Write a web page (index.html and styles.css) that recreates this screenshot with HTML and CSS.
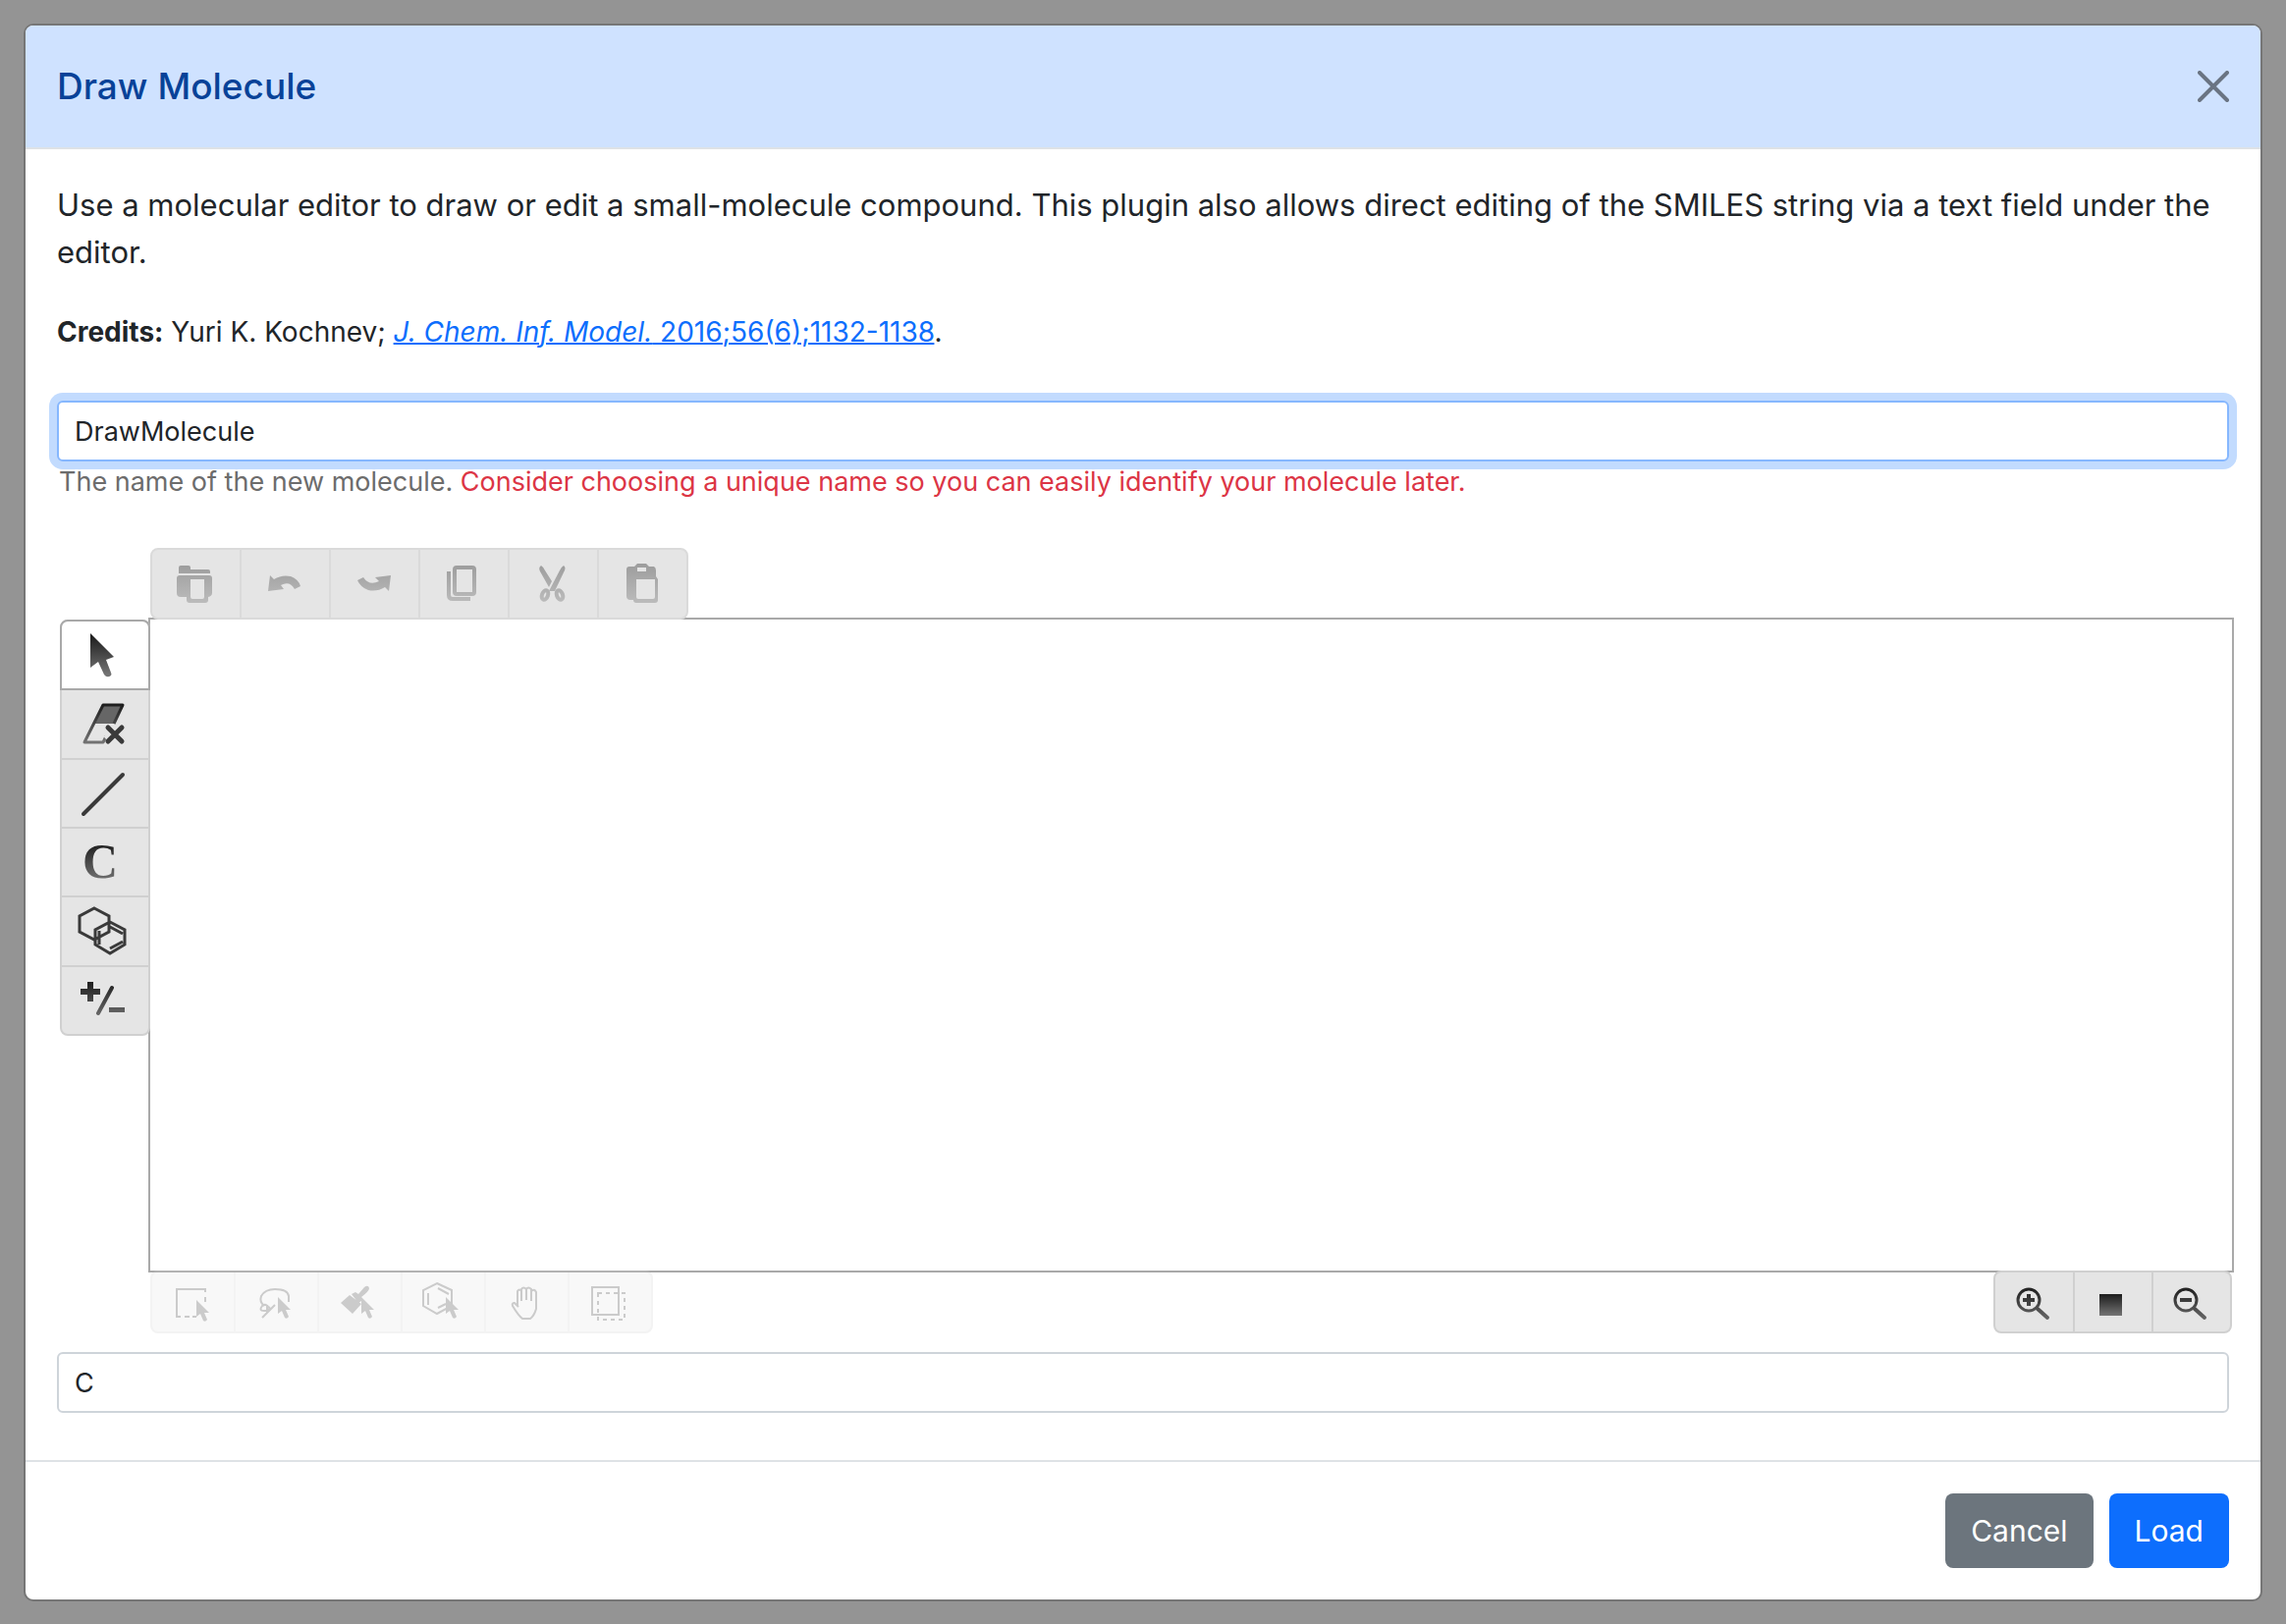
FILE: index.html
```html
<!DOCTYPE html>
<html lang="en">
<head>
<meta charset="utf-8">
<title>Draw Molecule</title>
<link rel="stylesheet" href="styles.css">
</head>
<body>
<svg class="defs" aria-hidden="true">
  <defs>
    <linearGradient id="dark" gradientUnits="userSpaceOnUse" x1="0" y1="4" x2="0" y2="44"><stop offset="0" stop-color="#1c1c1c"/><stop offset="1" stop-color="#747474"/></linearGradient>
    <linearGradient id="pale" gradientUnits="userSpaceOnUse" x1="0" y1="4" x2="0" y2="44"><stop offset="0" stop-color="#9d9d9d"/><stop offset="1" stop-color="#bcbcbc"/></linearGradient>
    <linearGradient id="square" x1="0" y1="0" x2="0" y2="1"><stop offset="0" stop-color="#1c1c1c"/><stop offset="1" stop-color="#747474"/></linearGradient>
    <path id="pointer" d="M0 0v17l4-3 3 7q2 2 4-1l-3-7h5z"/>
  </defs>
</svg>
<main class="modal" role="dialog" aria-labelledby="title">
  <header class="modal-header">
    <h1 id="title">Draw Molecule</h1>
    <button class="close" type="button" aria-label="Close">
      <svg viewBox="0 0 32 32"><path d="M2 2l28 28M30 2L2 30" fill="none" stroke="#6a7483" stroke-width="4" stroke-linecap="round"/></svg>
    </button>
  </header>
  <div class="modal-body">
    <p class="intro">Use a molecular editor to draw or edit a small-molecule compound. This plugin also allows direct editing of the SMILES string via a text field under the editor.</p>
    <p class="credits"><b>Credits:</b> Yuri K. Kochnev; <a href="#"><i>J. Chem. Inf. Model.</i> 2016;56(6);1132-1138</a>.</p>
    <div class="field">
      <input class="control active" id="name" type="text" value="DrawMolecule" aria-label="Molecule name" aria-describedby="hint">
      <p class="hint" id="hint">The name of the new molecule. <span class="warn">Consider choosing a unique name so you can easily identify your molecule later.</span></p>
    </div>
    <section class="editor" aria-label="Molecular editor">
      <div class="tools tools-top pale" role="toolbar" aria-label="Edit">
        <button type="button" disabled aria-label="Open"><svg viewBox="0 0 48 48"><path d="M8 13V7q0-2 2-2h8q2 0 2 2v2h18q2 0 2 2v2z"/><path fill-rule="evenodd" d="M9 15h30q3 0 3 3v15q0 3-4 4v3q0 3-3 3H19q-3 0-3-3v-3h-6q-4 0-4-4V18q0-3 3-3zm11 4v18q0 2 2 2h10q2 0 2-2V19z"/></svg></button>
        <button type="button" disabled aria-label="Undo"><svg viewBox="0 0 48 48"><path d="M8 31l2-16 4 4q8-5 17-3 8 3 10 10l-6 3q-5-9-14-4l3 4z"/></svg></button>
        <button type="button" disabled aria-label="Redo"><svg viewBox="0 0 48 48"><path d="M42 15l-2 16-4-4q-8 5-17 3-8-3-11-10l6-3q6 9 16 4l-4-4z"/></svg></button>
        <button type="button" disabled aria-label="Copy"><svg viewBox="0 0 48 48"><path class="line" stroke-width="4" d="M18 7h16q2 0 2 2v23q0 2-2 2H18q-2 0-2-2V9q0-2 2-2z"/><path class="line" stroke-width="4" d="M10 11v24q0 4 4 4h18"/></svg></button>
        <button type="button" disabled aria-label="Cut"><svg viewBox="0 0 48 48"><path d="M13 5q3 2 4 5l7 11-3 6-9-16q-2-4 1-6zM36 5q3 2 0 7L27 31h-6l11-21q1-3 4-5z"/><ellipse class="line" stroke-width="4" cx="17" cy="35" rx="3" ry="5" transform="rotate(20 17 35)"/><ellipse class="line" stroke-width="4" cx="32" cy="35" rx="3" ry="5" transform="rotate(-20 32 35)"/></svg></button>
        <button type="button" disabled aria-label="Paste"><svg viewBox="0 0 48 48"><path fill-rule="evenodd" d="M12 6h5l3-3h9l3 3h5q2 1 2 4v6l2 3v21q0 3-3 3H19q-3 0-3-3h-3q-4 0-4-4V9q0-3 3-3zm8 1v4h9V7zm-1 12v18q0 2 2 2h15q2 0 2-2V19z"/></svg></button>
      </div>
      <div class="tools tools-side" role="toolbar" aria-label="Draw">
        <button type="button" class="selected" aria-label="Select"><svg viewBox="0 0 48 48"><path d="M12 2v35l8-6 6 13q3 4 7 1 1-1 0-3l-5-13 8-3z"/></svg></button>
        <button type="button" aria-label="Erase"><svg viewBox="0 0 48 48"><path fill="#666" d="M25 4h21L36 24H16z"/><path class="line" stroke-width="3" stroke-linejoin="round" d="M36 24L45 5H25L6 43h19l3-6"/><path stroke="#e5e5e5" stroke-width="10" d="M29 28l14 13M43 28L29 41"/><path class="line flat" stroke-width="5" stroke-linecap="round" d="M30 28l14 14M44 28L30 42"/></svg></button>
        <button type="button" aria-label="Bond"><svg viewBox="0 0 48 48"><path class="line flat" stroke-width="4" stroke-linecap="round" d="M5 45L45 5"/></svg></button>
        <button type="button" aria-label="Carbon atom"><svg viewBox="0 0 48 48"><text x="4" y="40">C</text></svg></button>
        <button type="button" aria-label="Ring templates"><svg viewBox="0 0 48 48"><g class="line flat" stroke-width="3"><path d="M16 1l15 8v16l-15 8-15-8V9zM32 15l15 8v15l-15 9-15-9V23zM32 20l13 7M21 24v14M32 42l13-7"/></g></svg></button>
        <button type="button" aria-label="Charge"><svg viewBox="0 0 48 48"><path d="M2 12h7V5h6v7h7v6h-7v7H9v-7H2z"/><path class="line" stroke-width="4" stroke-linecap="round" d="M34 11L20 37"/><path d="M31 31h16v5H31z"/></svg></button>
      </div>
      <div class="canvas"></div>
      <div class="tools-row">
        <div class="tools tools-select" role="toolbar" aria-label="Selection">
          <button type="button" disabled aria-label="Rectangle"><svg viewBox="0 0 40 40"><path class="line" stroke-width="2" d="M5 36V7h29v3M34 15v5M5 35h4M13 35h5M21 35h4"/><use href="#pointer" x="25" y="18"/></svg></button>
          <button type="button" disabled aria-label="Lasso"><svg viewBox="0 0 40 40"><path class="line" stroke-width="2" d="M9 24q-5-4-3-10 4-7 14-7 13 0 14 7v6M20 23L7 36M14 26q-3-5-7-2-4 5 2 5 7 0 5-4M12 24v7"/><use href="#pointer" x="23" y="15"/></svg></button>
          <button type="button" disabled aria-label="Brush"><svg viewBox="0 0 40 40"><path d="M2 21l9-8 12 9-9 10zM13 12l4-2 3 2 6-7q4-3 5 1 0 3-8 9v4l-3 2z"/><use href="#pointer" x="23" y="15"/></svg></button>
          <button type="button" disabled aria-label="Fragment"><svg viewBox="0 0 40 40"><path class="line" stroke-width="2" d="M15 1l15 7v16l-15 8-14-8V8zM16 6l11 6M6 11v12M16 26l8-4"/><use href="#pointer" x="24" y="15"/></svg></button>
          <button type="button" disabled aria-label="Pan"><svg viewBox="0 0 40 40"><path class="line" stroke-width="2" d="M12 24V9q2-3 4 0v10V7q2-3 5 0v11V7q2-3 5 0v12V9q3-3 5 1v17q-2 7-6 10h-8Q13 34 7 24q-1-3 2-3l4 4"/></svg></button>
          <button type="button" disabled aria-label="Select all"><svg viewBox="0 0 40 40"><path class="line" stroke-width="2" d="M3 5h27v28H3z"/><path class="line" stroke-width="2" stroke-dasharray="4 4" d="M9 11h27v27H9z"/></svg></button>
        </div>
        <div class="tools tools-zoom" role="toolbar" aria-label="Zoom">
          <button type="button" aria-label="Zoom in"><svg viewBox="0 0 40 40"><circle class="line" stroke-width="3" cx="15" cy="18" r="11"/><path d="M9 16h4v-4h4v4h4v4h-4v4h-4v-4H9z"/><path class="line" stroke-width="4" stroke-linecap="round" d="M24 27l10 9"/></svg></button>
          <button type="button" aria-label="Fit to canvas"><svg viewBox="0 0 40 40"><path class="block" d="M7 12h23v22H7z"/></svg></button>
          <button type="button" aria-label="Zoom out"><svg viewBox="0 0 40 40"><circle class="line" stroke-width="3" cx="15" cy="18" r="11"/><path d="M9 16h12v4H9z"/><path class="line" stroke-width="4" stroke-linecap="round" d="M24 27l10 9"/></svg></button>
        </div>
      </div>
    </section>
    <input class="control" type="text" value="C" aria-label="SMILES string">
  </div>
  <footer class="modal-footer">
    <button class="btn secondary" type="button">Cancel</button>
    <button class="btn primary" type="button">Load</button>
  </footer>
</main>
</body>
</html>
```
FILE: styles.css
```css
* {
  box-sizing: border-box;
}

body {
  margin: 0;
  min-height: 100vh;
  padding: 24px 24px 23px;
  display: flex;
  background: #949494;
  color: #212529;
  font-family: Inter, "Liberation Sans", sans-serif;
  font-size: 31px;
  line-height: 48px;
}

h1,
p {
  margin: 0;
}

button,
input {
  font: inherit;
}

.defs {
  position: absolute;
  width: 0;
  height: 0;
}

.modal {
  flex: 1;
  min-width: 0;
  display: flex;
  flex-direction: column;
  border: 2px solid #767676;
  border-radius: 10px;
  background: #fff;
  overflow: hidden;
}

.modal-header {
  display: flex;
  align-items: center;
  justify-content: space-between;
  padding: 32px;
  background: #cfe2ff;
  border-bottom: 2px solid #dee2e6;
}

h1 {
  color: #084298;
  font-size: 37px;
  font-weight: 500;
  line-height: 60px;
}

.close {
  display: flex;
  padding: 0;
  border: 0;
  background: none;
}

.close svg {
  display: block;
  width: 32px;
  height: 32px;
}

.modal-body {
  flex: 1;
  display: flex;
  flex-direction: column;
  padding: 33px 32px 48px;
}

.credits {
  margin: 33px 0 46px;
  font-size: 28px;
}

a {
  color: #0d6efd;
  text-decoration-thickness: 2px;
}

.control {
  display: block;
  width: 100%;
  height: 62px;
  padding: 0 16px;
  border: 2px solid #ced4da;
  border-radius: 6px;
  background: #fff;
  color: #212529;
  font-size: 27px;
}

.active {
  border-color: #86b7fe;
  box-shadow: 0 0 0 8px #c2dbfe;
  outline: 0;
}

.hint {
  padding-left: 2px;
  color: #6c6c6c;
  font-size: 27px;
  line-height: 42px;
}

.warn {
  color: #dc3545;
}

.editor {
  flex: 1;
  display: grid;
  grid-template-columns: 90px 1fr;
  grid-template-rows: 71px 1fr auto;
  margin: 46px -5px 19px 3px;
}

.tools {
  position: relative;
  display: flex;
  width: max-content;
  border: 2px solid #d0d0d0;
  border-radius: 8px;
  background: #e5e5e5;
}

.tools button {
  display: flex;
  align-items: center;
  justify-content: center;
  padding: 0 4px 0 0;
  border: 0 solid #d0d0d0;
  background: none;
}

.tools button + button {
  border-left-width: 2px;
}

.tools svg {
  display: block;
  width: 48px;
  height: 48px;
  overflow: visible;
  fill: url(#dark);
}

.tools text {
  font: bold 50px "Liberation Serif", serif;
}

.tools .line {
  fill: none;
  stroke: url(#dark);
}

.tools .flat {
  stroke: #3a3a3a;
}

.tools .block {
  fill: url(#square);
}

.tools-top {
  grid-column: 2;
  height: 73px;
  margin-left: 2px;
}

.tools-top button {
  width: 91px;
}

.tools-top button:first-child {
  width: 89px;
}

.pale,
.pale button {
  border-color: #dadada;
}

.pale svg {
  fill: url(#pale);
}

.pale .line {
  stroke: url(#pale);
}

.tools-side {
  grid-column: 1;
  grid-row: 2;
  flex-direction: column;
  width: 92px;
  height: 424px;
  margin-top: 2px;
}

.tools-side button {
  flex: 1;
  padding-right: 6px;
}

.tools-side button + button {
  border-left-width: 0;
  border-top-width: 2px;
}

.tools-side .selected {
  margin: -2px -2px 0;
  border: 2px solid #a9a9a9;
  border-radius: 8px 8px 0 0;
  background: #fff;
}

.tools-side .selected + button {
  border-top-width: 0;
}

.canvas {
  grid-column: 2;
  grid-row: 2;
  border: 2px solid #a9a9a9;
  background: #fff;
}

.tools-row {
  grid-column: 2;
  display: flex;
  justify-content: space-between;
  margin: -2px 2px 0;
}

.tools-row .tools {
  height: 64px;
}

.tools-row svg {
  width: 40px;
  height: 40px;
}

.tools-select {
  opacity: .25;
}

.tools-select button {
  width: 85px;
}

.tools-select button:first-child {
  width: 83px;
}

.tools-select svg {
  fill: #333;
}

.tools-select .line {
  stroke: #333;
}

.tools-zoom button {
  width: 80px;
  padding-right: 2px;
}

.tools-zoom button:first-child {
  width: 79px;
}

.modal-footer {
  display: flex;
  justify-content: flex-end;
  gap: 16px;
  padding: 32px;
  border-top: 2px solid #dee2e6;
}

.btn {
  height: 76px;
  padding: 0 26px;
  border: 0;
  border-radius: 8px;
  color: #fff;
  font-size: 30px;
}

.secondary {
  background: #6c757d;
}

.primary {
  background: #0d6efd;
}
```
